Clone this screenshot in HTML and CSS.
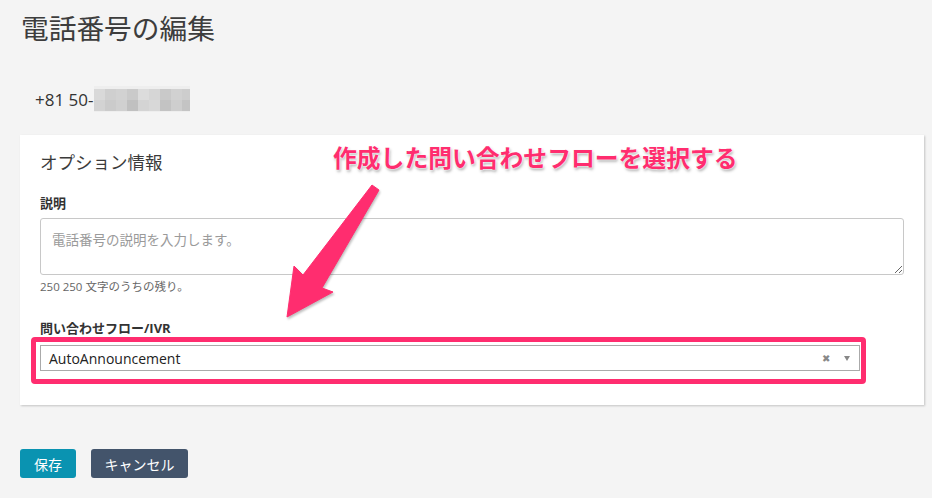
FILE: index.html
```html
<!DOCTYPE html>
<html lang="ja">
<head>
    <meta charset="UTF-8">
    <title>電話番号の編集</title>
    <link rel="stylesheet" href="styles.css">
</head>
<body>
    <h1 class="page-title">電話番号の編集</h1>

    <div class="phone">
        <span>+81 50-</span>
        <svg class="mosaic" width="96" height="26" viewBox="0 0 96 26">
            <rect x="0" y="0" width="96" height="26" fill="#eeeeee"/>
            <rect x="0" y="3" width="11" height="11" fill="#d9d9d9"/>
            <rect x="11" y="3" width="11" height="11" fill="#cfcfcf"/>
            <rect x="22" y="3" width="11" height="11" fill="#d2d2d2"/>
            <rect x="33" y="3" width="11" height="11" fill="#cacaca"/>
            <rect x="44" y="3" width="11" height="11" fill="#dcdcdc"/>
            <rect x="55" y="3" width="11" height="11" fill="#d6d6d6"/>
            <rect x="66" y="3" width="11" height="11" fill="#c9c9c9"/>
            <rect x="77" y="3" width="11" height="11" fill="#d1d1d1"/>
            <rect x="88" y="3" width="8" height="11" fill="#cdcdcd"/>
            <rect x="0" y="14" width="11" height="11" fill="#d3d3d3"/>
            <rect x="11" y="14" width="11" height="11" fill="#cbcbcb"/>
            <rect x="22" y="14" width="11" height="11" fill="#d0d0d0"/>
            <rect x="33" y="14" width="11" height="11" fill="#c0c0c0"/>
            <rect x="44" y="14" width="11" height="11" fill="#d4d4d4"/>
            <rect x="55" y="14" width="11" height="11" fill="#d8d8d8"/>
            <rect x="66" y="14" width="11" height="11" fill="#c3c3c3"/>
            <rect x="77" y="14" width="11" height="11" fill="#cecece"/>
            <rect x="88" y="14" width="8" height="11" fill="#c4c4c4"/>
        </svg>
    </div>

    <div class="card">
        <h2>オプション情報</h2>

        <label class="field-label" for="desc">説明</label>
        <textarea id="desc" class="textarea" placeholder="電話番号の説明を入力します。"></textarea>
        <p class="help">250 250 文字のうちの残り。</p>

        <label class="field-label flow-label">問い合わせフロー/IVR</label>
        <div class="select">
            <span class="select-value">AutoAnnouncement</span>
            <span class="select-clear">&#x2716;</span>
            <span class="select-arrow"></span>
        </div>

        <!-- annotation box -->
        <div class="highlight"></div>
    </div>

    <div class="actions">
        <button class="btn btn-save">保存</button>
        <button class="btn btn-cancel">キャンセル</button>
    </div>

    <!-- annotation -->
    <div class="note">作成した問い合わせフローを選択する</div>
    <svg class="note-arrow" width="100" height="140" viewBox="280 180 100 140">
        <polygon points="372,185 379,190 322,288 333,292 287,317 294,266 303,275" fill="#ff2d6f" stroke="#ff2d6f" stroke-width="1" stroke-linejoin="round"/>
    </svg>
</body>
</html>
```

FILE: styles.css
```css
/* Basic Reset */
* {
    box-sizing: border-box;
    margin: 0;
    padding: 0;
}

body {
    position: relative;
    font-family: "Open Sans", "Noto Sans CJK JP", sans-serif;
    background-color: #f4f4f4;
    color: #333;
    padding: 0 20px;
    width: 932px;
    height: 498px;
    overflow: hidden;
}

/* Header */
.page-title {
    font-size: 27.7px;
    font-weight: 400;
    line-height: 36px;
    color: #3d3d3d;
    padding-top: 10px;
    margin-left: 1px;
}

.phone {
    display: flex;
    align-items: center;
    height: 26px;
    margin-top: 40px;
    padding-left: 15px;
    font-size: 17px;
    color: #333;
}

.mosaic {
    display: block;
    margin-left: 0;
}

/* Card */
.card {
    position: relative;
    width: 904px;
    margin-top: 23px;
    background: #fff;
    padding: 14px 20px 34px;
    box-shadow: 1px 1px 2px rgba(0, 0, 0, 0.2);
}

.card h2 {
    font-size: 17.5px;
    font-weight: 400;
    line-height: 26px;
    color: #3b3b3b;
}

.field-label {
    display: block;
    font-size: 13px;
    font-weight: 700;
    line-height: 18px;
    color: #333;
    margin-top: 19px;
}

.textarea {
    display: block;
    width: 864px;
    height: 57px;
    margin-top: 6px;
    border: 1px solid #c8c8c8;
    border-radius: 3px;
    padding: 10px 11px;
    font-family: inherit;
    font-size: 13.5px;
    color: #333;
}

.textarea::placeholder {
    color: #9a9a9a;
}

.help {
    font-size: 11.5px;
    line-height: 16px;
    color: #666;
    margin-top: 4px;
}

.flow-label {
    margin-top: 24px;
}

.select {
    display: flex;
    align-items: center;
    width: 820px;
    height: 26px;
    margin-top: 8px;
    border: 1px solid #aaa;
    padding: 0 8px;
    font-size: 14px;
    color: #222;
}

.select-value {
    flex: 1;
}

.select-clear {
    font-size: 10px;
    color: #888;
    margin-right: 14px;
}

.select-arrow {
    width: 0;
    height: 0;
    border-left: 3px solid transparent;
    border-right: 3px solid transparent;
    border-top: 5px solid #888;
    margin-right: 1px;
}

.highlight {
    position: absolute;
    left: 11px;
    top: 202px;
    width: 835px;
    height: 47px;
    border: 5px solid #ff2d6f;
    border-radius: 4px;
}

/* Buttons */
.actions {
    display: flex;
    gap: 15px;
    margin-top: 44px;
}

.btn {
    height: 29px;
    border: none;
    border-radius: 3px;
    color: #fff;
    font-family: inherit;
    font-size: 14px;
    padding: 0;
    white-space: nowrap;
}

.btn-save {
    background-color: #0a93b1;
    width: 56px;
}

.btn-cancel {
    background-color: #43546b;
    width: 97px;
}

/* Annotation */
.note {
    position: absolute;
    left: 333px;
    top: 142px;
    font-size: 23.8px;
    font-weight: 700;
    line-height: 32px;
    color: #ff2d6f;
    text-shadow: 0 0 2px #fff, 0 0 2px #fff, 1px 2px 3px rgba(0, 0, 0, 0.35);
}

.note-arrow {
    position: absolute;
    left: 280px;
    top: 180px;
    filter: drop-shadow(1px 2px 1px rgba(0, 0, 0, 0.25));
}
```
